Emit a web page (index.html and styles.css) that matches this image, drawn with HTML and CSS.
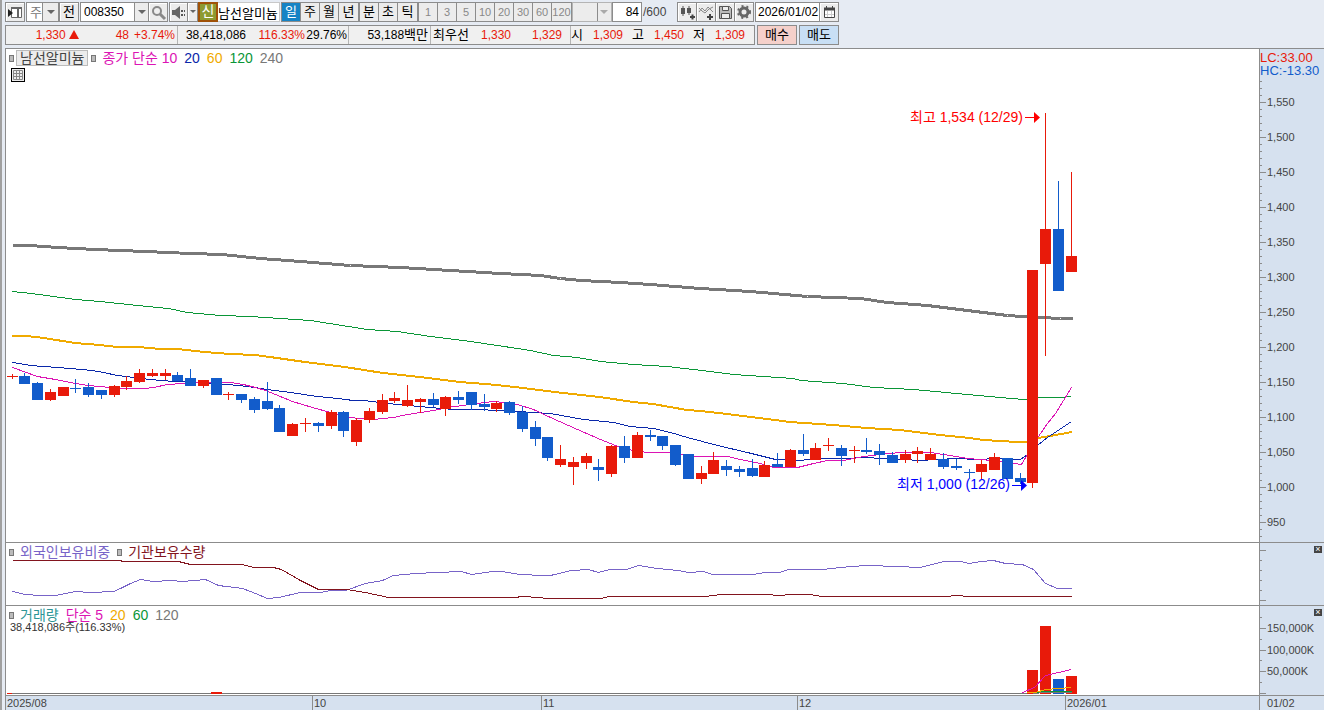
FILE: index.html
```html
<!DOCTYPE html>
<html lang="ko">
<head>
    <meta charset="UTF-8">
    <meta name="viewport" content="width=device-width, initial-scale=1.0">
    <title>남선알미늄 - 주식 차트</title>
    <link rel="stylesheet" href="styles.css">
</head>
<body>

    <header>
        <div class="toolbar">
            <button class="btn icon" aria-label="창 메뉴">
                <svg width="17" height="17"><path d="M4.500 3.500h10v10h-10z" fill="#fff" stroke="#666"/><path d="M4 4h11M11 5v9" stroke="#666" stroke-width="2" fill="none"/><path d="M1 5l5 4-5 4z" fill="#222"/></svg>
            </button>
            <div class="combo kind">
                <select aria-label="구분"><option>주</option></select>
            </div>
            <button class="btn">전</button>
            <div class="combo code gap-s">
                <input type="text" value="008350" aria-label="종목코드">
            </div>
            <button class="btn icon joined" aria-label="종목검색">
                <svg width="17" height="17"><circle cx="7" cy="7" r="4" fill="#eee" stroke="#888" stroke-width="2"/><path d="M10 10l5 5" stroke="#888" stroke-width="3"/></svg>
            </button>
            <button class="btn icon sound gap-s" aria-label="소리">
                <svg width="17" height="17"><path d="M2 6h3l5-4v13l-5-4H2z" fill="#666"/><path d="M11 6h2v2h-2zM11 10h2v2h-2zM14 6h1v2h-1zM14 10h1v2h-1z" fill="#555"/></svg>
            </button>
            <button class="btn drop" aria-label="소리 설정"></button>
            <span class="credit">신</span>
            <input type="text" class="stock-name" value="남선알미늄" aria-label="종목명">

            <div class="group periods">
                <button class="active">일</button><button>주</button><button>월</button><button>년</button>
            </div>
            <div class="group">
                <button>분</button><button>초</button><button>틱</button>
            </div>
            <div class="group minutes">
                <button disabled>1</button><button disabled>3</button><button disabled>5</button><button disabled>10</button><button disabled>20</button><button disabled>30</button><button disabled>60</button><button disabled>120</button>
            </div>
            <div class="combo unit off">
                <select aria-label="단위" disabled><option></option></select>
            </div>
            <input type="text" class="count" id="count" value="84">
            <label class="total" for="count">/600</label>

            <button class="btn icon" aria-label="차트 추가">
                <svg width="17" height="17"><path d="M2 4h4v6H2zM8 4h4v5H8zM3.500 2h1v10h-1zM9.500 2h1v9h-1z" fill="#555"/><path d="M11 13h5M13.500 10.500v5" stroke="#444" stroke-width="2"/></svg>
            </button>
            <button class="btn icon joined" aria-label="지표 추가">
                <svg width="17" height="17"><path d="M1 8l3-4 3 3 3-4 5 5M1 4l3 3 3 2 4-4 4-2" stroke="#888" fill="none"/><path d="M9 13h6M12 10v6" stroke="#444" stroke-width="2"/></svg>
            </button>
            <button class="btn icon joined" aria-label="저장">
                <svg width="17" height="17"><path d="M2.500 2.500h10l2 2v10h-12z" fill="#bbb" stroke="#555"/><path d="M5.500 2.500h6v4h-6zM4.500 9.500h8v5h-8z" fill="#eee" stroke="#555"/></svg>
            </button>
            <button class="btn icon joined" aria-label="설정">
                <svg width="17" height="17"><circle cx="8" cy="8" r="4" fill="none" stroke="#666" stroke-width="3"/><circle cx="8" cy="8" r="6" fill="none" stroke="#666" stroke-width="2" stroke-dasharray="2 3"/></svg>
            </button>
            <input type="text" class="date" value="2026/01/02" aria-label="날짜">
            <button class="btn icon joined" aria-label="달력">
                <svg width="17" height="17"><path d="M3.500 4.500h10v9h-10z" fill="#fff" stroke="#444"/><path d="M3 5h11" stroke="#444" stroke-width="3"/><path d="M6.500 7v6M10.500 7v6M4 10.500h9" stroke="#ccc"/><path d="M5.500 2v2M11.500 2v2" stroke="#444"/></svg>
            </button>
        </div>

        <div class="quotes">
            <div class="quote-box">
                <div class="cell c1">
                    <span class="up price">1,330 <i class="tri"></i></span>
                    <span class="up diff">48</span>
                    <span class="up rate">+3.74%</span>
                </div>
                <div class="cell c2">
                    <span class="vol">38,418,086</span>
                    <span class="up vol-rate">116.33%</span>
                    <span class="turn">29.76%</span>
                </div>
                <div class="cell c3"><span class="amount">53,188<b>백만</b></span></div>
                <div class="cell c4">
                    <b>최우선</b>
                    <span class="up ask">1,330</span>
                    <span class="up bid">1,329</span>
                </div>
                <div class="cell c5">
                    <b>시</b><span class="up">1,309</span>
                    <b>고</b><span class="up">1,450</span>
                    <b>저</b><span class="up">1,309</span>
                </div>
            </div>
            <button class="order buy">매수</button>
            <button class="order sell">매도</button>
        </div>
    </header>

    <main class="chart">
        <section class="pane">
            <div class="legend">
                <i class="mark"></i><span class="name">남선알미늄</span>
                <i class="mark"></i><span class="ma10">종가 단순 10</span>
                <span class="ma20">20</span><span class="ma60">60</span><span class="ma120">120</span><span class="ma240">240</span>
            </div>
            <button class="grid-btn" aria-label="데이터 표">
                <svg width="12" height="12"><path d="M1.500 1.500h9v9h-9zM1 4.500h10M1 7.500h10M4.500 1v10M7.500 1v10" fill="none" stroke="#888"/></svg>
            </button>
            <svg id="price"></svg>
        </section>
        <aside class="axis">
            <div class="band">
                <div class="lc">LC:33.00</div>
                <div class="hc">HC:-13.30</div>
            </div>
            <svg id="priceAxis"></svg>
        </aside>

        <section class="pane">
            <div class="legend">
                <i class="mark"></i><span class="foreign">외국인보유비중</span>
                <i class="mark"></i><span class="inst">기관보유수량</span>
            </div>
            <svg id="holding"></svg>
        </section>
        <aside class="axis">
            <button class="close" aria-label="닫기"></button>
            <svg id="holdingAxis"></svg>
        </aside>

        <section class="pane">
            <div class="legend">
                <i class="mark"></i><span class="volume">거래량</span>
                <span class="ma10">단순 5</span><span class="ma60">20</span><span class="ma120">60</span><span class="ma240">120</span>
            </div>
            <div class="volume-now">38,418,086주(116.33%)</div>
            <svg id="volume"></svg>
        </section>
        <aside class="axis">
            <button class="close" aria-label="닫기"></button>
            <svg id="volumeAxis"></svg>
        </aside>

        <div class="dates">
            <span>2025/08</span><span>10</span><span>11</span><span>12</span><span>2026/01</span>
        </div>
        <div class="last-date">01/02</div>
    </main>

    <script src="chart.js"></script>
</body>
</html>
```
FILE: styles.css
```css
* {
    box-sizing: border-box;
}

body {
    margin: 0;
    height: 100vh;
    display: flex;
    flex-direction: column;
    padding-left: 3px;
    border-left: 2px solid #a0a0a0;
    background: #e6ebf3;
    font-family: "Liberation Sans", "Noto Sans CJK KR", sans-serif;
    font-size: 12px;
    color: #000;
    overflow: hidden;
}

button, input, select {
    font-family: inherit;
    font-size: 12px;
    color: #000;
    margin: 0;
    padding: 0;
    border-radius: 0;
    outline: none;
}

/* Toolbar */
header {
    height: 48px;
    flex: none;
    padding-top: 2px;
}

.toolbar {
    display: flex;
    height: 20px;
    white-space: nowrap;
}

.btn {
    flex: none;
    width: 20px;
    height: 20px;
    border: 1px solid #8c8c8c;
    background: #ececec;
    box-shadow: inset 1px 1px #fff;
    font-size: 13px;
    line-height: 16px;
}

.icon {
    display: flex;
    align-items: center;
    justify-content: center;
}

.joined {
    width: 19px;
    border-left: none;
}

.sound {
    width: 19px;
}

.gap-s {
    margin-left: 1px;
}

.combo {
    flex: none;
    position: relative;
    height: 20px;
    border: 1px solid #8c8c8c;
    background: #fff;
}

.combo select, .combo input {
    display: block;
    width: 100%;
    height: 18px;
    padding-left: 3px;
    border: none;
    background: none;
    appearance: none;
}

/* arrow button and its triangle */
.combo::before {
    content: "";
    position: absolute;
    right: 0;
    top: 0;
    width: 13px;
    height: 18px;
    border-left: 1px solid #8c8c8c;
    background: #ececec;
}

.combo::after, .drop::after {
    content: "";
    position: absolute;
    right: 3px;
    top: 7px;
    border: 4px solid transparent;
    border-top-color: #666;
    border-bottom: none;
}

.kind {
    width: 33px;
    margin-left: 1px;
}

.kind::before {
    width: 15px;
}

.kind select {
    font-size: 13px;
    color: #777;
}

.code {
    width: 69px;
}

.combo.code::after {
    right: 2px;
}

.btn.drop {
    position: relative;
    width: 10px;
    border-left: none;
}

.drop::after {
    right: 1px;
    border-width: 3px;
    border-bottom: none;
}

.credit {
    flex: none;
    width: 20px;
    height: 20px;
    border: 2px solid #a05208;
    background: #8d9a32;
    color: #fff;
    font-size: 14px;
    line-height: 15px;
    text-align: center;
}

.stock-name {
    flex: none;
    width: 62px;
    height: 20px;
    border: 1px solid #c8c8c8;
    border-left: none;
    font-size: 13px;
    background: #fff;
}

.group {
    flex: none;
    display: flex;
    border: 1px solid #8c8c8c;
    background: #ececec;
}

.periods {
    margin-left: 1px;
}

.group button {
    width: 19px;
    height: 18px;
    border: none;
    border-right: 1px solid #8c8c8c;
    background: none;
    font-size: 13px;
    line-height: 16px;
}

.group button:last-child {
    border-right: none;
}

.group .active {
    background: #1583c5;
    color: #fff;
}

.minutes button {
    font-size: 11px;
    color: #888;
}

.unit {
    width: 40px;
    background: #ececec;
}

.off {
    border-color: #b4b4b4;
}

.combo.off::after {
    border-top-color: #aaa;
}

.count, .date {
    flex: none;
    height: 20px;
    border: 1px solid #8c8c8c;
    background: #fff;
}

.count {
    width: 30px;
    padding-right: 2px;
    text-align: right;
}

.total {
    flex: none;
    width: 35px;
    padding-left: 1px;
    line-height: 20px;
    color: #444;
}

.date {
    width: 65px;
    padding-left: 2px;
    margin-left: 1px;
}

/* Quote line */
.quotes {
    display: flex;
    gap: 2px;
    margin-top: 3px;
    height: 20px;
}

.quote-box {
    flex: none;
    display: flex;
    width: 750px;
    border: 1px solid #8c8c8c;
    background: #f0f0f0;
    line-height: 18px;
    white-space: nowrap;
}

.quote-box b {
    font-weight: normal;
    font-size: 13px;
}

.cell {
    flex: none;
    display: flex;
    justify-content: flex-end;
    padding-right: 2px;
    border-right: 1px solid #b4b4b4;
    text-align: right;
}

.c1 { width: 172px; }
.c2 { width: 171px; padding-right: 1px; }
.c3 { width: 82px; }
.c4 { width: 140px; padding-right: 8px; }
.c5 { width: 183px; padding-right: 9px; border: none; }

.diff { width: 50px; }
.rate { width: 46px; }
.vol-rate { width: 59px; }
.turn { width: 42px; }
.ask { width: 42px; }
.bid { width: 51px; }

.c5 span {
    width: 31px;
    margin-right: 9px;
}

.c5 span:last-child {
    margin-right: 0;
}

.c5 b {
    width: 21px;
    text-align: left;
}

.up {
    color: #e81a0a;
}

.tri {
    display: inline-block;
    border: 5px solid transparent;
    border-top: none;
    border-bottom: 9px solid #e81a0a;
}

.order {
    flex: none;
    width: 40px;
    height: 20px;
    border: 1px solid #8c8c8c;
    font-size: 13px;
    line-height: 16px;
}

.buy { background: #f5d0ca; }
.sell { background: #c8dff5; }

/* Chart */
.chart {
    flex: 1;
    min-height: 0;
    display: grid;
    grid-template-columns: 1fr 65px;
    grid-template-rows: 1fr 63px 90px 14px;
    border-top: 1px solid #8c8c8c;
    border-left: 1px solid #8c8c8c;
    background: #fff;
}

.pane, .axis {
    position: relative;
    min-height: 0;
    overflow: hidden;
    border-bottom: 1px solid #8c8c8c;
}

.pane > svg, .axis > svg {
    display: block;
    width: 100%;
    height: 100%;
    font-size: 11px;
}

.axis, .last-date {
    border-left: 1px solid #8c8c8c;
    background: #d6e1ef;
}

.legend {
    position: absolute;
    top: 0;
    left: 3px;
    display: flex;
    align-items: center;
    gap: 7px;
    height: 18px;
    font-size: 14px;
    line-height: 16px;
    white-space: nowrap;
}

.mark {
    width: 5px;
    height: 7px;
    margin-right: -1px;
    border: 1px solid #777;
    background: #bbb;
}

.name {
    height: 16px;
    padding: 0 3px;
    margin: 0 -4px;
    border: 1px solid #bbb;
    background: #ececec;
    color: #444;
    line-height: 14px;
}

.ma10 { color: #dc14b4; }
.ma20 { color: #0a28aa; }
.ma60 { color: #f0aa00; }
.ma120 { color: #0a9637; }
.ma240 { color: #787878; }
.foreign { color: #7864c8; }
.inst { color: #82141e; }
.volume { color: #2d9696; }

.grid-btn {
    position: absolute;
    left: 5px;
    top: 19px;
    width: 14px;
    height: 14px;
    border: 1px solid #000;
    background: #ececec;
}

.grid-btn svg {
    display: block;
}

.volume-now {
    position: absolute;
    left: 4px;
    top: 14px;
    font-size: 11px;
    line-height: 14px;
    color: #333;
}

.band {
    position: absolute;
    left: 0;
    top: 2px;
    font-size: 13px;
    line-height: 13px;
}

.lc { color: #e81a0a; }
.hc { color: #125ccb; }

.close {
    position: absolute;
    right: 2px;
    top: 3px;
    width: 8px;
    height: 7px;
    border: none;
    background: #444;
}

.close::before {
    content: "×";
    display: block;
    color: #fff;
    font-size: 9px;
    line-height: 7px;
}

.dates, .last-date {
    font-size: 11px;
    line-height: 14px;
    color: #444;
}

.dates {
    display: grid;
    grid-template-columns: 306px 229px 256px 268px 1fr;
    background: #d6e1ef;
}

.dates span {
    padding-left: 1px;
    border-left: 1px solid #8c8c8c;
}

.dates span:first-child {
    border-left: none;
}

.last-date {
    padding-left: 7px;
}
```
FILE: chart.js
```js
const RED = "#e81a0a";
const BLUE = "#125ccb";
const STEP = 12.76; // distance between two days

// colour, high, body top, body bottom, low
const candles = [
    "r 374 376 377 379", "b 373 376 384 384", "b 382 383 400 400", "r 389 392 400 401",
    "r 387 387 396 396", "b 379 388 389 393", "b 383 387 395 397", "b 390 390 395 399",
    "r 385 386 395 397", "r 376 381 387 390", "r 369 373 382 383", "r 369 373 376 377",
    "r 369 373 376 380", "b 372 375 381 381", "b 369 378 386 386", "r 380 380 386 388",
    "b 378 378 395 395", "r 392 394 395 400", "b 394 394 400 403", "b 397 399 410 413",
    "b 382 401 409 410", "b 405 408 432 432", "r 423 424 436 436", "r 418 423 424 432",
    "b 422 423 426 432", "r 410 412 426 429", "b 411 412 431 437", "r 418 420 442 446",
    "r 408 411 420 423", "r 394 400 412 414", "r 392 398 401 403", "r 385 400 406 407",
    "r 398 399 402 413", "b 393 399 405 407", "r 396 397 409 416", "b 391 397 400 404",
    "b 392 392 405 410", "b 394 404 407 411", "r 401 403 409 412", "b 401 402 413 415",
    "b 406 412 429 432", "b 421 427 439 446", "b 437 437 458 461", "r 445 459 465 467",
    "r 457 462 467 485", "r 453 456 463 469", "b 459 467 470 481", "r 445 446 474 477",
    "b 436 446 458 463", "r 432 435 458 458", "b 430 435 437 441", "b 436 436 446 450",
    "b 445 445 465 466", "b 454 454 479 479", "r 466 473 479 484", "r 452 460 474 474",
    "b 460 466 470 476", "b 466 469 472 477", "b 459 468 476 477", "r 461 465 477 477",
    "b 453 464 467 467", "r 449 450 467 467", "b 434 450 454 456", "r 443 448 460 460",
    "r 438 445 446 451", "b 445 448 456 466", "r 446 450 451 463", "b 438 450 452 454",
    "b 444 451 455 465", "b 452 455 463 463", "r 450 454 460 463", "r 447 451 454 463",
    "r 448 454 460 460", "b 453 459 467 469", "b 459 466 468 470", "b 469 472 473 478",
    "r 460 464 472 479", "r 453 457 470 470", "b 458 458 479 479", "b 473 478 482 484",
    "r 270 270 483 488", "r 113 229 264 356", "b 181 229 291 291", "r 172 256 272 272"
];

// moving averages
const ma240 = "12,245 30,245 57,247 95,249 145,251 190,253 222,254 260,258 300,261 350,265 400,267 450,270 500,273 540,275 560,278 580,280 620,282 650,284 700,288 750,291 807,296 860,298 887,302 927,305 967,310 1007,315 1022,316 1040,317 1060,318 1072,318";
const ma120 = "12,291 31,293 75,299 100,301 137,305 168,308 187,312 220,315 250,316 310,320 367,329 397,331 430,336 463,340 497,345 530,350 553,355 577,357 600,361 633,364 667,366 710,371 733,374 793,378 800,380 843,383 873,387 913,389 967,394 1000,397 1023,399 1040,397 1060,397 1071,396";
const ma60 = "12,336 25,336 37,337 50,339 75,343 100,345 117,347 139,347 160,349 177,349 205,352 230,354 255,355 270,357 305,362 345,367 383,373 420,377 460,382 497,385 523,388 563,393 600,397 633,402 653,404 687,410 700,411 727,414 767,419 790,422 833,425 867,428 900,430 940,435 970,438 983,440 1017,442 1027,442 1038,438 1050,436 1072,432";
const ma20 = "12,362 30,365 70,368 92,370 103,372 117,375 133,377 150,379 173,381 200,382 227,384 247,386 267,389 290,392 317,396 337,398 353,400 363,400 380,402 397,404 430,407 453,409 477,409 517,411 550,413 583,419 613,422 630,426 653,428 670,432 687,437 717,445 747,452 763,456 775,459 797,460 823,458 847,458 860,457 887,458 907,459 915,460 922,460 933,459 960,458 973,459 1000,458 1020,459 1027,454 1038,444 1047,437 1071,421";
const ma10 = "12,367 37,376 55,379 75,383 88,385 110,387 125,388 145,388 153,387 167,384 182,383 205,382 230,382 243,384 255,387 265,390 275,394 292,401 312,407 330,412 345,416 357,418 373,419 393,417 407,414 433,410 447,407 477,403 493,401 503,402 517,404 533,409 550,417 577,429 600,439 620,447 633,450 647,452 667,452 683,454 697,456 727,456 740,459 760,463 773,467 797,467 813,463 827,460 843,460 863,456 880,454 900,452 930,452 943,454 967,458 980,459 1000,461 1013,463 1021,464 1027,454 1038,436 1047,423 1055,413 1071,387";

const foreign = "12,591 25,594 40,595 55,595 75,591 90,592 113,591 120,588 130,583 140,579 153,581 170,580 182,581 205,579 218,585 242,588 255,593 267,598 278,597 300,592 320,592 330,590 345,590 365,583 382,580 393,575 415,573 437,572 461,571 471,574 492,571 502,571 519,574 543,575 550,575 571,570 588,569 598,572 609,569 626,569 638,565 657,568 678,570 688,572 703,571 712,574 753,574 764,572 779,572 788,569 822,569 850,566 867,565 898,566 919,567 932,564 943,561 960,561 969,563 980,561 993,560 1005,563 1022,564 1033,569 1045,583 1057,588 1071,588";
const inst = "12,560 120,560 122,561 178,561 190,564 242,564 253,567 273,567 281,569 300,580 318,589 346,589 365,592 388,597 516,597 520,596 529,596 532,597 541,597 544,598 601,598 608,596 705,596 712,595 722,594 770,594 775,595 783,595 786,594 809,594 815,595 822,596 949,596 952,595 961,595 964,596 1071,596";

// All panes share one plane, each one starts at its own top
function draw(id, left, top, shapes) {
    document.getElementById(id).innerHTML =
        `<g transform="translate(${-left} ${-top})">${shapes.join("")}</g>`;
}

function rect(x, y, w, h, color) {
    return `<rect x="${x}" y="${y}" width="${w}" height="${h}" fill="${color}"/>`;
}

function line(points, color, width = 1) {
    const shift = width % 2 ? 0.5 : 0;
    return `<polyline points="${points}" transform="translate(${shift} ${shift})" fill="none" stroke="${color}" stroke-width="${width}" shape-rendering="crispEdges"/>`;
}

function label(x, y, text, color, size) {
    return `<text x="${x}" y="${y}" fill="${color}" font-size="${size}">${text}</text>`;
}

function tick(y, long) {
    return rect(1260, y, long ? 6 : 2, 1, "#8c8c8c");
}

// Price
const price = [
    line(ma240, "#787878", 3), line(ma120, "#0a9637"), line(ma60, "#f0aa00", 2),
    line(ma20, "#0a28aa"), line(ma10, "#dc14b4")
];
candles.forEach((row, i) => {
    const [c, high, top, bottom, low] = row.split(" ");
    const x = Math.floor(12 + i * STEP);
    const color = c === "r" ? RED : BLUE;
    price.push(rect(x, high, 1, low - high, color));
    price.push(rect(x - 5, top, 11, bottom - top, color));
});
price.push(label(910, 122, "최고 1,534 (12/29)", "#f00", 14));
price.push(rect(1025, 117, 10, 1, "#f00"), `<path d="M1034 112l6 5.500-6 5.500z" fill="#f00"/>`);
price.push(label(897, 489, "최저 1,000 (12/26)", "#00f", 14));
price.push(rect(1012, 485, 10, 1, "#00f"), `<path d="M1021 480l6 5.500-6 5.500z" fill="#00f"/>`);
draw("price", 6, 49, price);

const priceAxis = [];
for (let y = 81; y < 540; y += 7) {
    priceAxis.push(tick(y, (y - 102) % 35 === 0));
}
for (let p = 1550; p >= 950; p -= 50) {
    priceAxis.push(label(1267, 106 + (1550 - p) * 0.7, p.toLocaleString("en-US"), "#444", 11));
}
draw("priceAxis", 1260, 49, priceAxis);

// Holdings
draw("holding", 6, 543, [line(foreign, "#7864c8"), line(inst, "#82141e")]);
draw("holdingAxis", 1260, 543, [550, 560, 570, 580, 590, 600].map(y => tick(y, y === 550 || y === 600)));

// Volume
draw("volume", 6, 606, [
    rect(12, 693, 1015, 1, "#787878"),
    rect(7, 693, 5, 1, RED),
    rect(211, 692, 11, 2, RED),
    rect(1027, 670, 11, 24, RED),
    rect(1040, 626, 11, 68, RED),
    rect(1053, 679, 11, 15, BLUE),
    rect(1066, 676, 11, 18, RED),
    line("1033,693 1045,692 1071,692", "#787878"),
    line("1033,692 1045,691 1071,691", "#0a9637"),
    line("1026,692 1035,692 1045,689 1058,688 1071,687", "#f0aa00"),
    line("1022,692 1034,687 1045,675 1058,672 1071,669", "#dc14b4")
]);
const volumeAxis = [617, 639, 660, 682].map(y => tick(y, false));
[628, 650, 671, 693].forEach(y => volumeAxis.push(tick(y, true)));
volumeAxis.push(label(1267, 632, "150,000K", "#444", 11));
volumeAxis.push(label(1267, 654, "100,000K", "#444", 11));
volumeAxis.push(label(1267, 675, "50,000K", "#444", 11));
draw("volumeAxis", 1260, 606, volumeAxis);
```
